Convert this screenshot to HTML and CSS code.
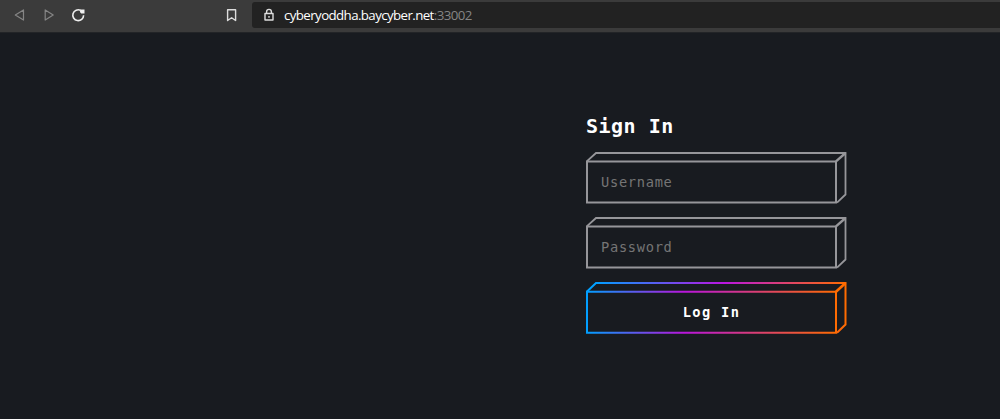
FILE: index.html
```html
<!DOCTYPE html>
<html lang="en">
<head>
<meta charset="utf-8">
<title>Sign In</title>
<link rel="stylesheet" href="styles.css">
</head>
<body>
<header class="toolbar">
  <nav class="nav">
    <svg class="icon" width="16" height="16" viewBox="0 0 16 16"><path d="M3.3 8 11.5 2.9v10.2Z" stroke="#858585" stroke-width="1.2"/></svg>
    <svg class="icon" width="16" height="16" viewBox="0 0 16 16"><path d="M12.2 8 4.2 2.9v10.2Z" stroke="#858585" stroke-width="1.2"/></svg>
    <svg class="icon" width="16" height="16" viewBox="0 0 16 16"><path d="M10.7 3.4A5.4 5.4 0 1 0 13.6 8.2" stroke="#eee" stroke-width="1.6"/><path d="M10.3 2.6h4.2v3.9h-3.3l-1.3-1.5Z" fill="#eee"/></svg>
  </nav>
  <svg class="icon bookmark" width="16" height="16" viewBox="0 0 16 16"><path d="M3.6 2.7h8v10.8L7.6 10.7l-4 2.8Z" stroke="#ddd" stroke-width="1.4"/></svg>
  <div class="address">
    <svg class="icon" width="14" height="16" viewBox="0 0 14 16"><path d="M3 6.5h8V13H3ZM4.6 6.5V4.8a2.4 2.4 0 0 1 4.8 0v1.7M7 9v1.7" stroke="#ddd" stroke-width="1.4"/></svg>
    <span class="url">cyberyoddha.baycyber.net<span class="port">:33002</span></span>
  </div>
</header>
<main class="page">
  <form class="login">
    <h1 class="title">Sign In</h1>
    <div class="box">
      <svg class="frame" width="262" height="54" viewBox="0 0 262 54"><use href="#cuboid" stroke="#96969a"/></svg>
      <input class="field" type="text" placeholder="Username">
    </div>
    <div class="box">
      <svg class="frame" width="262" height="54" viewBox="0 0 262 54"><use href="#cuboid" stroke="#96969a"/></svg>
      <input class="field" type="password" placeholder="Password">
    </div>
    <div class="box">
      <svg class="frame" width="262" height="54" viewBox="0 0 262 54">
        <defs>
          <linearGradient id="front" gradientUnits="userSpaceOnUse" x1="0" y1="0" x2="251" y2="0"><stop offset="0" stop-color="#00a0ff"/><stop offset=".39" stop-color="#b916dc"/><stop offset="1" stop-color="#ff6c00"/></linearGradient>
          <linearGradient id="back" gradientUnits="userSpaceOnUse" x1="9" y1="0" x2="260" y2="0"><stop offset="0" stop-color="#00a0ff"/><stop offset=".51" stop-color="#b916e2"/><stop offset="1" stop-color="#ff6c00"/></linearGradient>
          <g id="cuboid" fill="none">
            <path d="M1 10.4H250V51.4H1Z" stroke-width="2"/>
            <path d="M1 10.2 10 2H259.5V43.5L251 51.6" stroke-width="1.8"/>
            <path d="M250 10.4 259.5 2" stroke-width="2.4"/>
          </g>
        </defs>
        <g fill="none">
          <path d="M1 10.7H250V51.7H1Z" stroke="url(#front)" stroke-width="2"/>
          <path d="M1 10.5 10 2H259.5V43.5L251 51.8" stroke="url(#back)" stroke-width="2"/>
          <path d="M250 10.7 259.5 2" stroke="#ff6c00" stroke-width="2.6"/>
        </g>
      </svg>
      <button class="submit" type="button">Log In</button>
    </div>
  </form>
</main>
</body>
</html>
```
FILE: styles.css
```css
* { box-sizing: border-box; }
body {
  margin: 0;
  height: 419px;
  overflow: hidden;
  background: #181b20;
  font-family: "DejaVu Sans Mono", monospace;
}
.toolbar {
  display: flex;
  align-items: center;
  height: 33px;
  padding: 0 0 3px 12px;
  background: #3b3b3b;
  border-bottom: 1px solid #222427;
}
.nav { display: flex; gap: 13px; }
.icon { display: block; fill: none; stroke-linejoin: round; }
.bookmark { margin: 0 12px 0 138px; }
.address {
  display: flex;
  flex: 1;
  align-items: center;
  height: 26px;
  padding-left: 10px;
  background: #222;
  border-radius: 3px 0 0 3px;
}
.url {
  margin-left: 8px;
  color: #fff;
  font: 13.3px/20px "Open Sans", sans-serif;
  letter-spacing: -.6px;
  white-space: nowrap;
}
.port { color: #858585; letter-spacing: -.6px; }
.page { padding: 80px 0 0 586px; }
.login { display: flex; flex-direction: column; gap: 11px; width: 262px; }
.title {
  margin: 0 0 -4px;
  height: 31px;
  color: #fff;
  font-size: 20px;
  font-weight: 700;
  line-height: 26px;
  letter-spacing: .5px;
}
.box { display: grid; height: 54px; }
.frame { grid-area: 1 / 1; }
.field, .submit {
  grid-area: 1 / 1;
  width: 247px;
  height: 38px;
  margin: 12px 0 0 2px;
  border: 0;
  outline: 0;
  background: transparent;
  color: #fff;
  font-family: inherit;
}
.field { padding: 0 13px; font-size: 13.7px; letter-spacing: .7px; }
.field::placeholder { color: #757575; opacity: 1; }
.submit { padding: 0; font-size: 13.7px; font-weight: 700; letter-spacing: 1.35px; }
```
